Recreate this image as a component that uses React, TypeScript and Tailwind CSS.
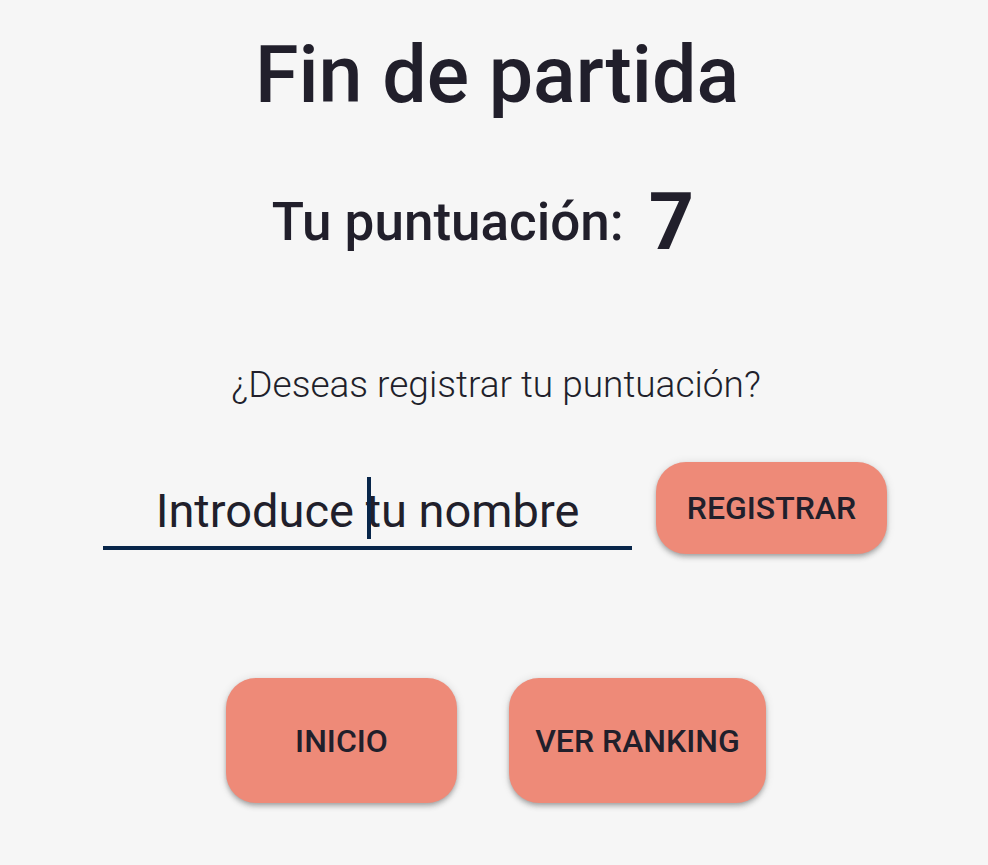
export default function App() {
  const btn =
    "flex items-center justify-center rounded-[30px] bg-[#ee8a78] text-[32px] leading-none font-medium text-[#211f2b] shadow-[0_2px_4px_-1px_rgba(0,0,0,0.2),0_4px_5px_0_rgba(0,0,0,0.14),0_1px_10px_0_rgba(0,0,0,0.12)]";

  return (
    <div
      className="min-h-screen w-full bg-[#f6f6f6] flex flex-col items-center text-[#211f2b]"
      style={{ fontFamily: "Roboto, 'Noto Sans', sans-serif" }}
    >
      {/* Title */}
      <h1 className="mt-[36px] ml-[6px] text-[79px] leading-none font-medium">Fin de partida</h1>

      {/* Score */}
      <div className="mt-[68px] mr-[22px] flex items-center gap-[25px]">
        <span className="text-[53px] leading-none font-medium">Tu puntuación:</span>
        <span className="text-[79px] leading-none font-bold">7</span>
      </div>

      <p className="mt-[104px] ml-[4px] text-[37px] leading-none font-light">
        ¿Deseas registrar tu puntuación?
      </p>

      {/* Register row */}
      <div className="mt-[59px] ml-[2px] flex items-start gap-[24px]">
        <div className="w-[529px] h-[88px] border-b-[4px] border-[#08264a] flex items-end justify-center pb-[12px]">
          <span className="text-[47px] leading-none font-normal whitespace-pre">
            Introduce{" "}
            <span className="relative">
              <span className="absolute left-[1px] top-[-6px] w-[4px] h-[62px] bg-[#08264a]" />
              tu nombre
            </span>
          </span>
        </div>
        <button className={`${btn} w-[231px] h-[92px]`}>REGISTRAR</button>
      </div>

      {/* Actions */}
      <div className="mt-[124px] ml-[4px] flex items-center gap-[52px]">
        <button className={`${btn} w-[231px] h-[125px]`}>INICIO</button>
        <button className={`${btn} w-[257px] h-[125px]`}>VER RANKING</button>
      </div>
    </div>
  );
}
